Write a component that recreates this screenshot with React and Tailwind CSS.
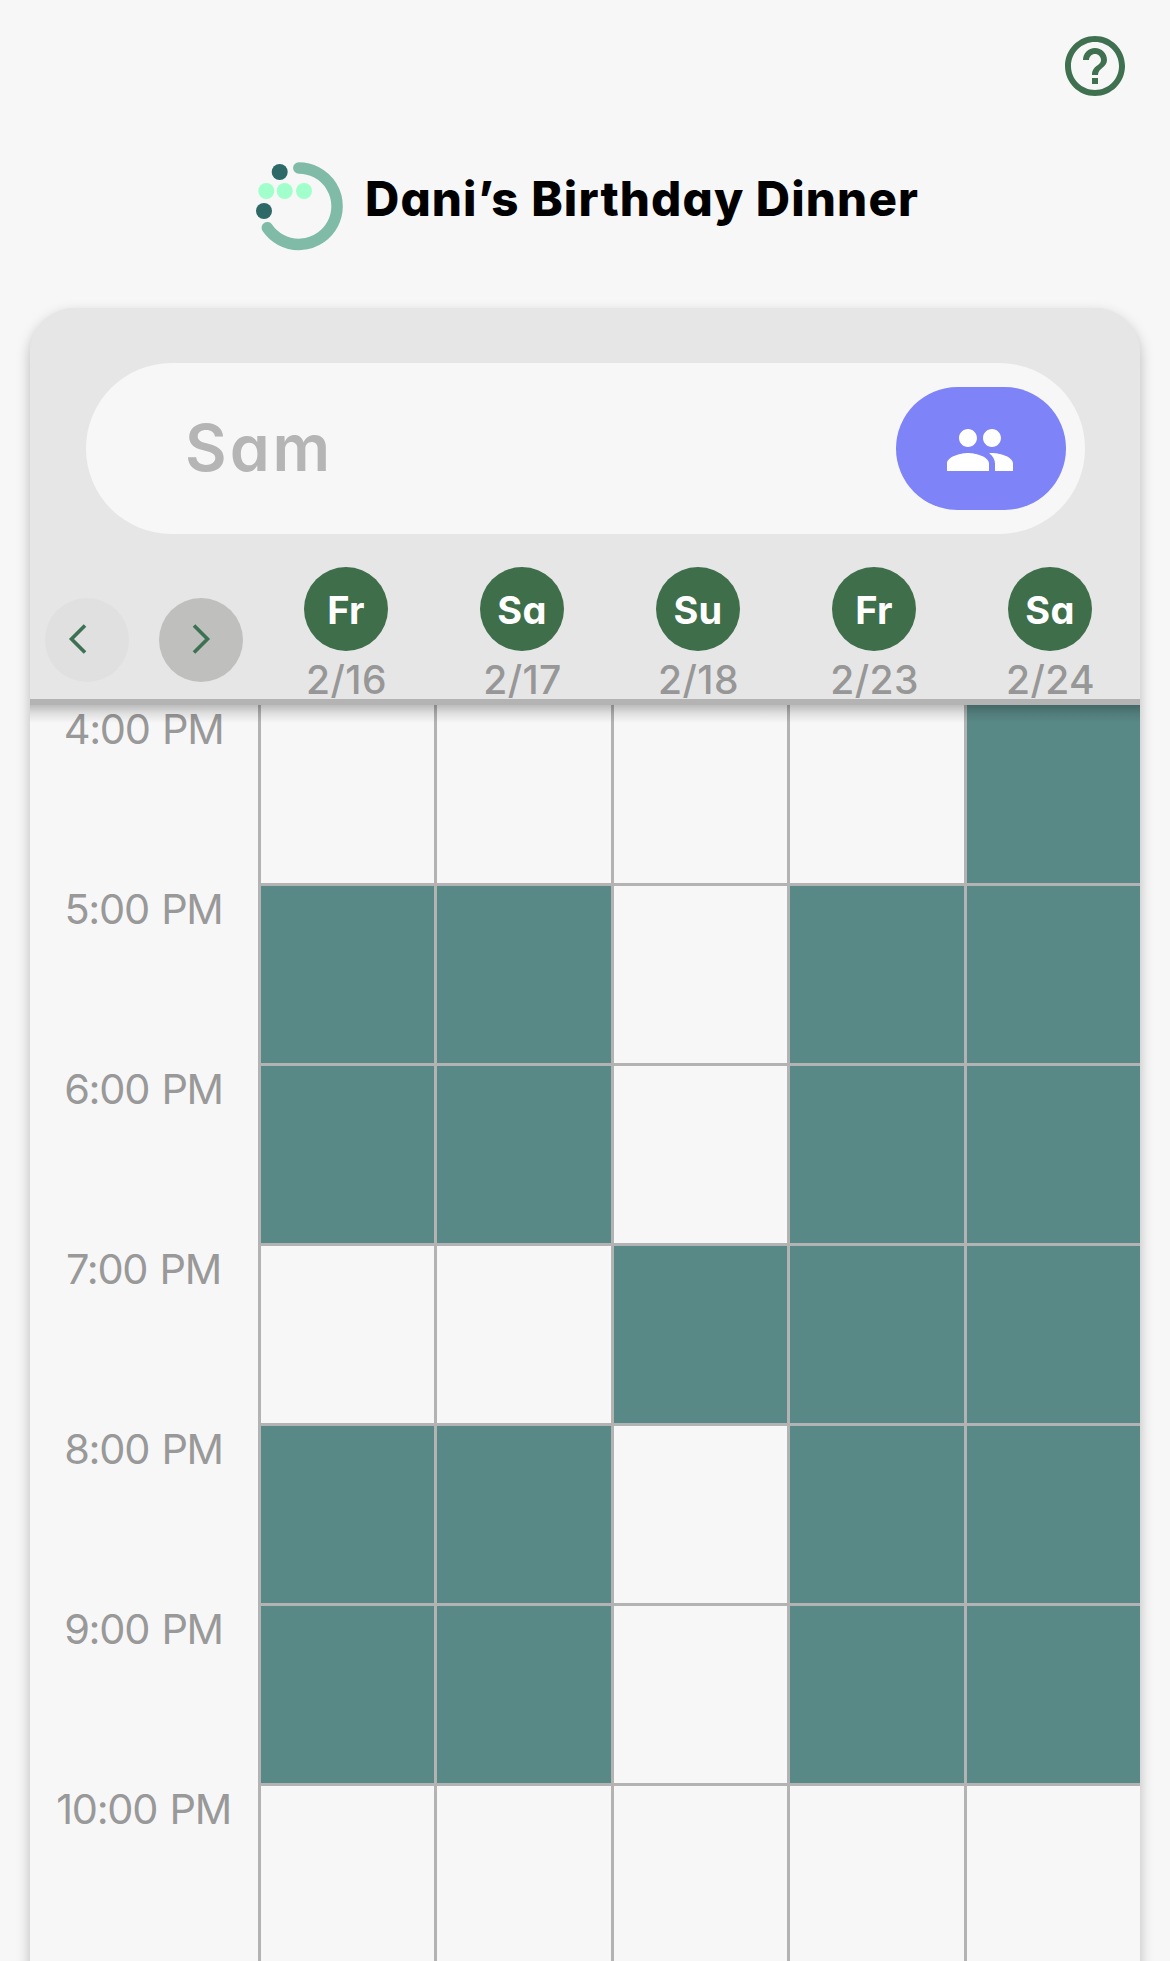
import { MdHelpOutline, MdPeople } from "react-icons/md";

const days = [
  { name: "Fr", date: "2/16" },
  { name: "Sa", date: "2/17" },
  { name: "Su", date: "2/18" },
  { name: "Fr", date: "2/23" },
  { name: "Sa", date: "2/24" },
];

const rows = [
  { time: "4:00 PM", free: [0, 0, 0, 0, 1] },
  { time: "5:00 PM", free: [1, 1, 0, 1, 1] },
  { time: "6:00 PM", free: [1, 1, 0, 1, 1] },
  { time: "7:00 PM", free: [0, 0, 1, 1, 1] },
  { time: "8:00 PM", free: [1, 1, 0, 1, 1] },
  { time: "9:00 PM", free: [1, 1, 0, 1, 1] },
  { time: "10:00 PM", free: [0, 0, 0, 0, 0] },
];

function Logo() {
  return (
    <svg className="h-[90px] w-[90px] shrink-0" viewBox="0 0 90 90" fill="none">
      <path d="M44.8 7A38.2 38.2 0 1 1 13.3 66.7" stroke="#80bba8" strokeWidth="11.5" strokeLinecap="round" />
      <circle cx="25.7" cy="11" r="8" fill="#2d6966" />
      <circle cx="10" cy="50" r="8" fill="#2d6966" />
      <circle cx="12.3" cy="30" r="8" fill="#a0ffca" />
      <circle cx="30.7" cy="30" r="8" fill="#a0ffca" />
      <circle cx="50" cy="30" r="8" fill="#a0ffca" />
    </svg>
  );
}

function Header() {
  return (
    <header className="h-[308px]">
      <div className="flex h-[161px] justify-end pt-[30px] pr-[39px]">
        <button className="h-[72px] w-[72px]" aria-label="Help">
          <MdHelpOutline className="h-[72px] w-[72px] text-[#3f704f]" />
        </button>
      </div>
      <div className="flex items-start pl-[254px]">
        <Logo />
        <h1 className="mt-2 ml-[21px] text-[47.5px] leading-[60px] font-extrabold tracking-[1.1px] whitespace-nowrap text-black">
          Dani’s Birthday Dinner
        </h1>
      </div>
    </header>
  );
}

function DayHeader({ day }) {
  return (
    <div className="flex flex-col items-center">
      <div className="flex h-[84px] w-[84px] items-center justify-center rounded-full bg-[#3e6e4a] pt-px text-[38px] leading-[56px] font-bold tracking-[0.3px] text-white">
        {day.name}
      </div>
      <div className="mt-[5px] h-11 pl-px text-[39px] leading-[48px] font-medium tracking-[0.4px] whitespace-nowrap text-[#979797]">
        {day.date}
      </div>
    </div>
  );
}

function Toolbar() {
  return (
    <div className="relative h-[397px] rounded-t-[45px] border-b-[6px] border-[#b3b3b3] bg-[#e6e6e6] px-[56px] pt-[55px]">
      <div className="mr-[-1px] flex h-[171px] items-center justify-between rounded-full bg-[#f7f7f7] pr-[19px] pl-[99px]">
        <span className="pb-px text-[64px] leading-[80px] font-semibold tracking-[3px] text-[#b5b5b5]">Sam</span>
        <button className="flex h-[123px] w-[170px] items-center justify-center rounded-full bg-[#7e83f7] pt-[3px] pr-[2px]" aria-label="People">
          <MdPeople className="h-[72px] w-[72px] text-white" />
        </button>
      </div>
      <div className="-mx-[56px] mt-[33px] flex">
        <div className="mt-[31px] flex w-[228px] gap-[30px] pl-[15px]">
          <button className="h-[84px] w-[84px] rounded-full bg-[#e0e0e0]" aria-label="Previous days">
            <svg viewBox="0 0 84 84" fill="none" stroke="#3d7153" strokeWidth="3.6">
              <path d="M40 27.5 26.5 41 40 54.5" />
            </svg>
          </button>
          <button className="h-[84px] w-[84px] rounded-full bg-[#bfbfbd]" aria-label="Next days">
            <svg viewBox="0 0 84 84" fill="none" stroke="#3d7153" strokeWidth="3.6">
              <path d="M35 27.5 48.5 41 35 54.5" />
            </svg>
          </button>
        </div>
        <div className="grid w-[880px] grid-cols-5">
          {days.map((day) => (
            <DayHeader key={day.date} day={day} />
          ))}
        </div>
      </div>
      <div className="pointer-events-none absolute inset-x-0 top-[397px] h-[18px] bg-linear-to-b from-black/24 via-black/9 to-transparent" />
    </div>
  );
}

function TimeRow({ row, first }) {
  return (
    <div className={first ? "flex h-[178px]" : "flex h-[180px]"}>
      <div className={first ? "w-[227px] shrink-0 text-center" : "w-[227px] shrink-0 pt-[2px] text-center"}>
        <span className="text-[41.5px] leading-[49px] font-normal tracking-[-1.3px] [word-spacing:2px] whitespace-nowrap text-[#999999]">
          {row.time}
        </span>
      </div>
      <div className={first ? "ml-[1px] grid flex-1 grid-cols-5" : "ml-[1px] grid flex-1 grid-cols-5 border-t-[3px] border-[#b3b3b3]"}>
        {row.free.map((free, i) => (
          <div
            key={i}
            className={free ? "border-l-[3px] border-[#b3b3b3] bg-[#598987]" : "border-l-[3px] border-[#b3b3b3]"}
          />
        ))}
      </div>
    </div>
  );
}

export default function App() {
  return (
    <div className="h-[1961px] w-[1170px] overflow-hidden bg-[#f7f7f7] font-['Inter',sans-serif] [font-feature-settings:'cv11']">
      <Header />
      <main className="mx-[30px] h-[1700px] rounded-t-[45px] bg-[#e6e6e6] shadow-[0_6px_14px_rgba(0,0,0,0.25)]">
        <Toolbar />
        <div className="bg-[#f7f7f7]">
          {rows.map((row, i) => (
            <TimeRow key={row.time} row={row} first={i === 0} />
          ))}
        </div>
      </main>
    </div>
  );
}
